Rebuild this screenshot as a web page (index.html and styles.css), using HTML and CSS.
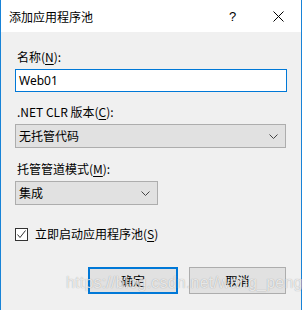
FILE: index.html
```html
<!DOCTYPE html>
<html lang="zh-CN">
<head>
<meta charset="UTF-8" />
<title>添加应用程序池</title>
<link rel="stylesheet" href="styles.css">
</head>
<body>
<div class="window">
  <div class="titlebar">
    <span class="title">添加应用程序池</span>
    <span class="help">?</span>
    <span class="close">
      <svg width="11" height="11" viewBox="0 0 11 11"><path d="M0.5 0.5 L10.5 10.5 M10.5 0.5 L0.5 10.5" stroke="#000" stroke-width="1" fill="none"/></svg>
    </span>
  </div>

  <div class="content">
    <div class="label l-name">名称(<u>N</u>):</div>
    <div class="textbox">Web01</div>

    <div class="label l-clr">.NET CLR 版本(<u>C</u>):</div>
    <div class="combo wide">
      <span>无托管代码</span>
      <svg class="arrow" width="9" height="5" viewBox="0 0 9 5"><path d="M0.5 0.5 L4.5 4.5 L8.5 0.5" stroke="#444" fill="none"/></svg>
    </div>

    <div class="label l-mode">托管管道模式(<u>M</u>):</div>
    <div class="combo narrow">
      <span>集成</span>
      <svg class="arrow" width="9" height="5" viewBox="0 0 9 5"><path d="M0.5 0.5 L4.5 4.5 L8.5 0.5" stroke="#444" fill="none"/></svg>
    </div>

    <div class="check-row">
      <span class="checkbox">
        <svg width="11" height="11" viewBox="0 0 11 11"><path d="M1.5 5.5 L4 8.5 L9.5 1.5" stroke="#333" stroke-width="1" fill="none"/></svg>
      </span>
      <span>立即启动应用程序池(<u>S</u>)</span>
    </div>

    <div class="buttons">
      <div class="btn default">确定</div>
      <div class="btn cancel">取消</div>
    </div>
  </div>

  <div class="watermark">https://blog.csdn.net/wang_peng</div>
</div>
</body>
</html>
```

FILE: styles.css
```css
html, body {
  margin: 0;
  padding: 0;
  background: #fff;
}
body {
  width: 303px;
  height: 310px;
  overflow: hidden;
  font-family: "Noto Sans CJK SC", "Noto Sans", sans-serif;
  font-size: 12px;
  color: #000;
}
.window {
  position: relative;
  width: 300px;
  height: 310px;
  border-left: 1px solid #1883d7;
  border-right: 1px solid #1883d7;
  background: #f0f0f0;
  display: flex;
  flex-direction: column;
}
.titlebar {
  height: 32px;
  background: #fff;
  display: flex;
  align-items: center;
}
.title {
  margin-left: 8px;
  flex: 1;
  line-height: 16px;
  margin-top: 1px;
}
.help {
  width: 12px;
  margin-right: 32px;
  font-family: "Liberation Sans", sans-serif;
  font-size: 13px;
  margin-top: 1px;
}
.close {
  width: 11px;
  height: 11px;
  margin-right: 17px;
  margin-top: 0;
  display: flex;
}
.content {
  padding: 17px 0 0 14px;
  display: flex;
  flex-direction: column;
}
.label {
  line-height: 16px;
  height: 16px;
  padding-left: 2px;
}
u {
  text-decoration-thickness: 1px;
  text-underline-offset: 2px;
}
.textbox {
  margin-top: 4px;
  width: 267px;
  height: 21px;
  border: 1px solid #0078d7;
  background: #fff;
  line-height: 21px;
  padding-left: 3px;
  font-family: "Noto Sans", sans-serif;
}
.l-clr { margin-top: 12px; }
.l-mode { margin-top: 13px; }
.combo {
  margin-top: 4px;
  height: 22px;
  border: 1px solid #adadad;
  background: #e1e1e1;
  display: flex;
  align-items: center;
  padding-left: 3px;
  box-sizing: content-box;
}
.combo span {
  flex: 1;
  line-height: 16px;
}
.combo .arrow {
  margin-right: 7px;
}
.wide { width: 266px; }
.narrow { width: 138px; }
.check-row {
  margin-top: 21px;
  display: flex;
  align-items: center;
  height: 16px;
  line-height: 16px;
}
.checkbox {
  width: 11px;
  height: 11px;
  border: 1px solid #333;
  background: #fff;
  margin-right: 7px;
  display: flex;
}
.buttons {
  margin-top: 25px;
  display: flex;
  padding-left: 73px;
  gap: 11px;
}
.btn {
  height: 23px;
  line-height: 23px;
  text-align: center;
  background: #e1e1e1;
  border: 2px solid #0078d7;
}
.btn.default {
  width: 86px;
}
.btn.cancel {
  width: 95px;
  height: 25px;
  line-height: 25px;
  border: 1px solid #adadad;
}
.watermark {
  position: absolute;
  left: 65px;
  top: 274px;
  font-family: "Liberation Sans", sans-serif;
  font-size: 16px;
  color: rgba(255, 255, 255, 0.75);
  text-shadow: 0 0 1px rgba(0, 0, 0, 0.35);
  letter-spacing: 0.2px;
}
```
